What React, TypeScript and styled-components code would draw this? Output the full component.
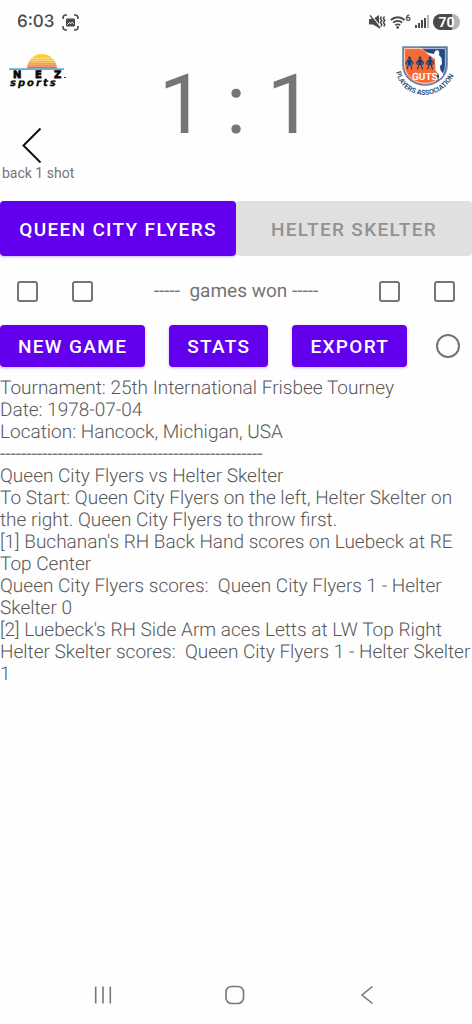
import React from 'react';
import styled, { createGlobalStyle } from 'styled-components';

const GlobalStyle = createGlobalStyle`
  *, *::before, *::after { box-sizing: border-box; }
  body { margin: 0; background: #fefefe; }
  button, input { font: inherit; margin: 0; }
`;

const Screen = styled.div`
  display: flex;
  flex-direction: column;
  min-height: 100vh;
  color: #757575;
  font-family: Roboto, sans-serif;
  font-size: 19px;
  line-height: 22px;
  text-rendering: geometricPrecision;
`;

const StatusBar = styled.header`
  display: flex;
  align-items: center;
  justify-content: space-between;
  height: 44px;
  padding: 0 12px 0 17px;
  color: #4a4a4a;
`;

const StatusGroup = styled.div<{ $gap: number }>`
  display: flex;
  align-items: center;
  gap: ${({ $gap }) => $gap}px;
`;

const Clock = styled.time`
  font-family: Inter, sans-serif;
  font-size: 17px;
  font-weight: 500;
`;

const Scoreboard = styled.section`
  display: grid;
  grid-template-columns: 1fr auto 1fr;
  height: 157px;
`;

const LeftSide = styled.div`
  display: flex;
  flex-direction: column;
  align-items: flex-start;
`;

const RightSide = styled.div`
  display: flex;
  justify-content: flex-end;
  align-items: flex-start;
  padding-right: 14px;
`;

const Score = styled.h1`
  margin: 0;
  padding-top: 14px;
  font-size: 83px;
  font-weight: 400;
  line-height: 96px;
`;

const BackButton = styled.button`
  display: flex;
  flex-direction: column;
  align-items: flex-start;
  margin-top: 36px;
  padding: 0 2px;
  border: 0;
  background: none;
  color: inherit;
  font-size: 14px;
  line-height: 18px;

  svg { margin-left: 18px; }
`;

const Teams = styled.div`
  display: flex;
`;

const Button = styled.button`
  height: 42px;
  padding: 1px 18px 0;
  border: 0;
  border-radius: 4px;
  background: #6200ee;
  color: #fff;
  font-weight: 500;
  letter-spacing: 0.07em;
  white-space: nowrap;
  box-shadow: 0 1px 3px rgba(98, 0, 238, 0.3);
`;

const TeamButton = styled(Button)`
  flex: 1;
  min-width: 0;
  height: 55px;
  padding-top: 2px;

  &:disabled {
    background: #e0e0e0;
    color: #929292;
    box-shadow: none;
  }
`;

const GamesWon = styled.div`
  display: flex;
  align-items: center;
  justify-content: space-between;
  height: 69px;
  padding: 1px 17px 0;
`;

const Boxes = styled.div`
  display: flex;
  gap: 34px;
`;

const CheckBox = styled.input`
  appearance: none;
  width: 21px;
  height: 21px;
  border: 2px solid #757575;
  border-radius: 3px;

  &:checked { background: #6200ee; }
`;

const Radio = styled(CheckBox)`
  width: 24px;
  height: 24px;
  margin-left: auto;
  border-radius: 50%;
`;

const Actions = styled.div`
  display: flex;
  align-items: center;
  gap: 24px;
  padding-right: 12px;
`;

const Log = styled.main`
  flex: 1;
  padding-top: 10px;
`;

const Label = styled.p`
  margin: 0;
  white-space: pre-wrap;
`;

const Entry = styled(Label)`
  color: #585858;
  font-weight: 300;
`;

const NavBar = styled.nav`
  display: flex;
  justify-content: space-between;
  padding: 0 93px 17px 91px;
`;

const NavButton = styled.button`
  display: flex;
  padding: 0;
  border: 0;
  background: none;
  color: #777;
`;

const CaptureIcon = () => (
  <svg width="17" height="17" viewBox="0 0 17 17" fill="none" stroke="currentColor" strokeWidth="1.6" aria-hidden="true">
    <path d="M1 5V4a3 3 0 0 1 3-3h1M12 1h1a3 3 0 0 1 3 3v1M16 12v1a3 3 0 0 1-3 3h-1M5 16H4a3 3 0 0 1-3-3v-1" />
    <rect x="4" y="4.5" width="9" height="8" rx="1.2" fill="currentColor" stroke="none" />
    <path d="M5.4 10.6l2-2 1.5 1 1.3-1.5 1.6 1.6" stroke="#fff" strokeWidth="1" />
  </svg>
);

const MuteIcon = () => (
  <svg width="17" height="16" viewBox="0 0 17 16" fill="none" stroke="currentColor" aria-hidden="true">
    <path d="M0 5h4L10 1v13L4 10.6H0z" fill="currentColor" stroke="none" />
    <path d="M2.2.8l9.2 12" stroke="#fefefe" strokeWidth="1.2" />
    <path d="M1 1.4l10 12.8" strokeWidth="1.5" />
    <path d="M12.4 2.5l-1 2 1.4 2-1.4 2 1.4 2-1 2M15.4 2.5l-1 2 1.4 2-1.4 2 1.4 2-1 2" strokeWidth="1.5" />
  </svg>
);

const WifiIcon = () => (
  <svg width="21" height="16" viewBox="0 0 21 16" fill="none" stroke="currentColor" strokeWidth="1.8" aria-hidden="true">
    <path d="M.8 6a10 10 0 0 1 13.8 0M3.1 8.7a6.6 6.6 0 0 1 9.2 0M5.3 11.3a3.4 3.4 0 0 1 4.8 0" />
    <circle cx="7.7" cy="13.4" r="1.3" fill="currentColor" stroke="none" />
    <text x="15.5" y="7" fontFamily="Roboto, sans-serif" fontSize="9" fontWeight="700" fill="currentColor" stroke="none">6</text>
  </svg>
);

const SignalIcon = () => (
  <svg width="14" height="14" viewBox="0 0 14 14" fill="currentColor" aria-hidden="true">
    <rect x="0" y="10" width="2" height="3" />
    <rect x="3" y="8" width="2" height="5" />
    <rect x="6" y="5" width="2" height="8" />
    <rect x="9" y="3" width="2" height="10" />
    <rect x="12" y="0" width="2" height="13" opacity="0.4" />
  </svg>
);

const BatteryIcon = () => (
  <svg width="27" height="16" viewBox="0 0 27 16" role="img" aria-label="Battery 70 percent">
    <rect width="27" height="16" rx="8" fill="#b4b4b4" />
    <path d="M8 0h11v16H8A8 8 0 0 1 8 0z" fill="#4a4a4a" />
    <text x="13.5" y="13" textAnchor="middle" fontFamily="Roboto, sans-serif" fontSize="14" fontWeight="700" fill="#fff">70</text>
  </svg>
);

const SUN_BANDS = [
  { y: 10, h: 4, color: '#fbd324' },
  { y: 14.4, h: 2.1, color: '#fdc22e' },
  { y: 16.9, h: 1.8, color: '#fdad38' },
  { y: 19.1, h: 1.7, color: '#f8923c' },
  { y: 21.2, h: 1.5, color: '#f37048' },
  { y: 23.1, h: 1.3, color: '#e94b46' },
];

const NezLogo = () => (
  <svg width="70" height="46" viewBox="0 0 70 46" role="img" aria-label="NEZ sports">
    <clipPath id="sun"><circle cx="42" cy="25" r="15" /></clipPath>
    <g clipPath="url(#sun)">
      {SUN_BANDS.map((band) => (
        <rect key={band.y} x="26" y={band.y} width="32" height={band.h} fill={band.color} />
      ))}
    </g>
    <path d="M9 25.2h55" stroke="#50b5d8" strokeWidth="1.8" />
    <g fill="#080808" stroke="#080808" fontFamily="DejaVu Sans, sans-serif" fontWeight="700">
      <g fontSize="10" strokeWidth="0.8">
        <text x="13" y="34">N</text>
        <text x="35" y="34">E</text>
        <text x="54" y="34">Z</text>
      </g>
      <text x="10" y="42" fontSize="10" fontStyle="oblique" letterSpacing="2" strokeWidth="0.3">sports</text>
    </g>
    <path d="M64 33.5h2" stroke="#333" />
  </svg>
);

const Player = ({ x }: { x: number }) => (
  <g transform={`translate(${x} 13)`} fill="#173c70" stroke="#173c70">
    <circle cx="0" cy="1" r="1.4" stroke="none" />
    <path d="M-2.2 2.6h4.4L1.4 8h-2.8z" stroke="none" />
    <path d="M-1.6 3.4L-3.6 6l1.2 1.6M1.6 3.4l2 2.6-1.2 1.6M-.8 7l-1.8 5.4M.8 7l1.8 5.4" fill="none" strokeWidth="1.1" />
  </g>
);

const GutsLogo = () => (
  <svg width="66" height="54" viewBox="0 0 66 54" role="img" aria-label="Guts Players Association">
    <clipPath id="shield"><path d="M11 3h44v18a22 20 0 0 1-44 0z" /></clipPath>
    <g clipPath="url(#shield)">
      <rect width="66" height="54" fill="#204b82" />
      <path d="M11 3h17l14 10 3 14-1 16H11z" fill="#f46a38" />
      <path d="M27 3c4 5 9 6 15 7l1-3 3-1 1.4 2.4L47 11l2.6 3 .4 6-2 2 .4 4 3 4-1 8-3 3-.4-10-3.6-5-.6-11-7-5z" fill="#fff" />
    </g>
    <path d="M11 3h44v18a22 20 0 0 1-44 0z" fill="none" stroke="#6d83a8" strokeWidth="1.6" />
    <path d="M12.6 4.6h40.8V21a20.4 18.4 0 0 1-40.8 0z" fill="none" stroke="#fff" strokeWidth="0.7" />
    <Player x={17.5} />
    <Player x={28} />
    <Player x={38} />
    <text x="20" y="36" fontFamily="Roboto, sans-serif" fontSize="10" fontWeight="700" fill="#fff">GUTS</text>
    <path id="guts-arc" d="M4 28C10 58 54 60 64 25" fill="none" />
    <text fontFamily="Roboto, sans-serif" fontSize="7" fontWeight="700" fill="#365481">
      <textPath href="#guts-arc">PLAYERS ASSOCIATION</textPath>
    </text>
  </svg>
);

const EVENT_LINES = [
  'Tournament: 25th International Frisbee Tourney',
  'Date: 1978-07-04',
  'Location: Hancock, Michigan, USA',
];

const PLAY_LINES = [
  'Queen City Flyers vs Helter Skelter',
  'To Start: Queen City Flyers on the left, Helter Skelter on the right. Queen City Flyers to throw first.',
  "[1] Buchanan's RH Back Hand scores on Luebeck at RE Top Center",
  'Queen City Flyers scores:  Queen City Flyers 1 - Helter Skelter 0',
  "[2] Luebeck's RH Side Arm aces Letts at LW Top Right",
  'Helter Skelter scores:  Queen City Flyers 1 - Helter Skelter 1',
];

const GameBoxes = ({ team }: { team: string }) => (
  <Boxes>
    <CheckBox type="checkbox" aria-label={`${team} won game 1`} />
    <CheckBox type="checkbox" aria-label={`${team} won game 2`} />
  </Boxes>
);

export default function App() {
  return (
    <Screen>
      <GlobalStyle />
      <StatusBar>
        <StatusGroup $gap={7}>
          <Clock>6:03</Clock>
          <CaptureIcon />
        </StatusGroup>
        <StatusGroup $gap={4}>
          <MuteIcon />
          <WifiIcon />
          <SignalIcon />
          <BatteryIcon />
        </StatusGroup>
      </StatusBar>

      <Scoreboard>
        <LeftSide>
          <NezLogo />
          <BackButton type="button">
            <svg width="24" height="38" viewBox="0 0 24 38" fill="none" stroke="#111" strokeWidth="2" aria-hidden="true">
              <path d="M20.5 2.5L3.5 19.5l17 17" />
            </svg>
            back 1 shot
          </BackButton>
        </LeftSide>
        <Score>1 : 1</Score>
        <RightSide>
          <GutsLogo />
        </RightSide>
      </Scoreboard>

      <Teams>
        <TeamButton type="button">QUEEN CITY FLYERS</TeamButton>
        <TeamButton type="button" disabled>HELTER SKELTER</TeamButton>
      </Teams>

      <GamesWon>
        <GameBoxes team="Queen City Flyers" />
        <Label>-----  games won -----</Label>
        <GameBoxes team="Helter Skelter" />
      </GamesWon>

      <Actions>
        <Button type="button">NEW GAME</Button>
        <Button type="button">STATS</Button>
        <Button type="button">EXPORT</Button>
        <Radio type="radio" aria-label="Game option" />
      </Actions>

      <Log>
        {EVENT_LINES.map((line) => (
          <Entry key={line}>{line}</Entry>
        ))}
        <Label>{'-'.repeat(50)}</Label>
        {PLAY_LINES.map((line) => (
          <Entry key={line}>{line}</Entry>
        ))}
      </Log>

      <NavBar>
        <NavButton type="button" aria-label="Recent apps">
          <svg width="24" height="24" viewBox="0 0 24 24" fill="none" stroke="currentColor" strokeWidth="1.6">
            <path d="M4.7 3.5v17M12 3.5v17M19.3 3.5v17" />
          </svg>
        </NavButton>
        <NavButton type="button" aria-label="Home">
          <svg width="24" height="24" viewBox="0 0 24 24" fill="none" stroke="currentColor" strokeWidth="1.6">
            <rect x="3" y="3.5" width="17.5" height="17" rx="5.5" />
          </svg>
        </NavButton>
        <NavButton type="button" aria-label="Back">
          <svg width="24" height="24" viewBox="0 0 24 24" fill="none" stroke="currentColor" strokeWidth="1.6">
            <path d="M17.5 3.5L7 12l10.5 8.5" />
          </svg>
        </NavButton>
      </NavBar>
    </Screen>
  );
}
